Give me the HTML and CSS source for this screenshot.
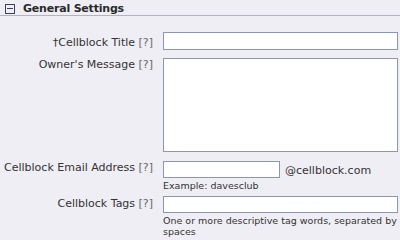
FILE: index.html
```html
<!DOCTYPE html>
<html lang="en">
<head>
    <meta charset="UTF-8">
    <meta name="viewport" content="width=device-width, initial-scale=1.0">
    <title>General Settings</title>
    <link rel="stylesheet" href="styles.css">
</head>
<body>
    <div class="secao">
        <!-- Cabeçalho da seção -->
        <div class="secao-topo">
            <span class="toggle"></span>
            <h2>General Settings</h2>
        </div>

        <form class="form-config">
            <div class="linha">
                <label class="rotulo rotulo-meio" for="titulo">&dagger;Cellblock Title <span class="ajuda">[?]</span></label>
                <div class="campo">
                    <input type="text" id="titulo" class="entrada">
                </div>
            </div>

            <div class="linha linha-area">
                <label class="rotulo" for="mensagem">Owner's Message <span class="ajuda">[?]</span></label>
                <div class="campo">
                    <textarea id="mensagem" class="area"></textarea>
                </div>
            </div>

            <div class="linha linha-email">
                <label class="rotulo" for="email">Cellblock Email Address <span class="ajuda">[?]</span></label>
                <div class="campo">
                    <div class="email">
                        <input type="text" id="email" class="entrada entrada-curta">
                        <span class="dominio">@cellblock.com</span>
                    </div>
                    <p class="dica">Example: davesclub</p>
                </div>
            </div>

            <div class="linha">
                <label class="rotulo rotulo-tags" for="tags">Cellblock Tags <span class="ajuda">[?]</span></label>
                <div class="campo">
                    <input type="text" id="tags" class="entrada entrada-tags">
                    <p class="dica">One or more descriptive tag words, separated by spaces</p>
                </div>
            </div>
        </form>
    </div>
</body>
</html>
```

FILE: styles.css
```css
/* Reset */
* {
    margin: 0;
    padding: 0;
    box-sizing: border-box;
}

body {
    font-family: 'DejaVu Sans', Verdana, sans-serif;
    font-size: 11px;
    background-color: #efeef4;
    color: #333;
    width: 400px;
    height: 240px;
    overflow: hidden;
}

/* Cabeçalho */
.secao-topo {
    display: flex;
    align-items: center;
    height: 16px;
    padding-left: 5px;
    padding-top: 2px;
    border-bottom: 1px solid #b4b4bc;
}

.toggle {
    position: relative;
    width: 10px;
    height: 10px;
    border: 1px solid #3a3f5c;
    margin-right: 8px;
}

.toggle::after {
    content: "";
    position: absolute;
    left: 1px;
    right: 1px;
    top: 3px;
    height: 1px;
    background-color: #3a3f5c;
}

h2 {
    font-size: 11px;
    font-weight: bold;
    letter-spacing: -0.2px;
    color: #2a2a2a;
}

/* Formulário */
.form-config {
    padding-top: 16px;
}

.linha {
    display: flex;
    align-items: flex-start;
    margin-bottom: 8px;
}

.linha-area {
    margin-bottom: 9px;
}

.linha-email {
    margin-bottom: 5px;
}

.rotulo {
    width: 163px;
    padding-right: 10px;
    text-align: right;
    line-height: 13px;
}

.rotulo-meio {
    padding-top: 4px;
}

.rotulo-tags {
    padding-top: 1px;
}

.ajuda {
    color: #666;
}

.campo {
    width: 235px;
}

.entrada {
    display: block;
    width: 235px;
    height: 18px;
    border: 1px solid #8a97ad;
    background-color: #fff;
}

.entrada-curta {
    width: 117px;
    height: 17px;
}

.entrada-tags {
    height: 17px;
}

.area {
    display: block;
    width: 235px;
    height: 94px;
    border: 1px solid #8a97ad;
    background-color: #fff;
    resize: none;
}

.email {
    display: flex;
    align-items: center;
}

.dominio {
    margin-left: 5px;
    margin-top: 1px;
}

.dica {
    font-size: 9.5px;
    line-height: 11px;
    margin-top: 2px;
    color: #333;
}
```
